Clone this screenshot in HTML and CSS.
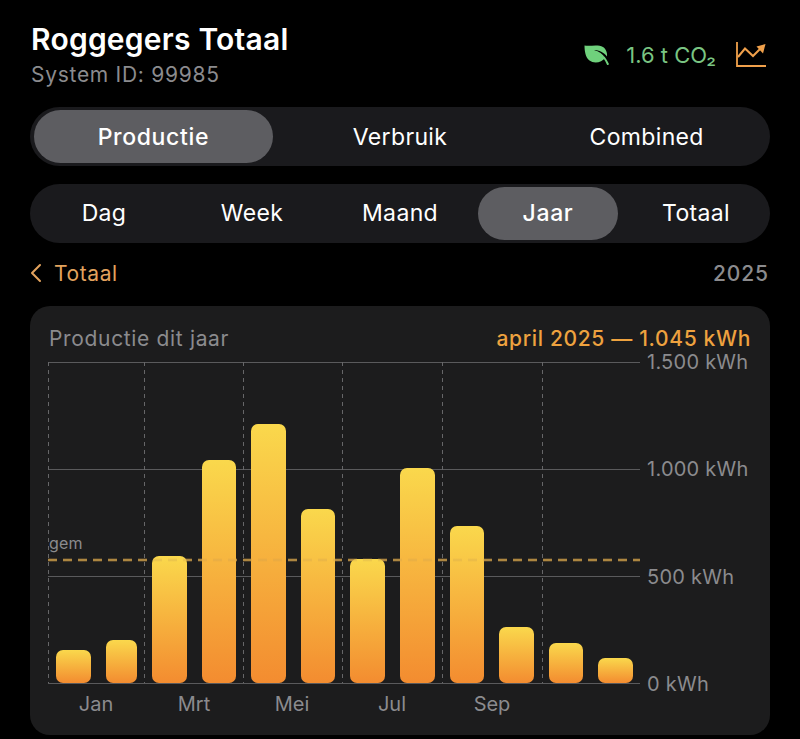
FILE: index.html
```html
<!DOCTYPE html>
<html lang="nl">
<head>
  <meta charset="UTF-8" />
  <title>Roggegers Totaal</title>
  <link rel="stylesheet" href="styles.css">
</head>
<body>

  <div class="top-bar">
    <div>
      <h1>Roggegers Totaal</h1>
      <div class="system-id">System ID: 99985</div>
    </div>
    <div class="top-right">
      <svg class="leaf" width="26" height="22" viewBox="0 0 26 22">
        <path fill="#6fd17c" d="M1.500 1.500 C7 2.500 15 0 20 3 C23 5 24.500 9 24 12.500 C21 8.500 16 6 11 6 C16 7.500 20 10 22 14 C19 18.500 11 20 6.500 16.500 C2.500 13.500 1.500 7 1.500 1.500 Z"/>
        <path fill="none" stroke="#6fd17c" stroke-width="2" stroke-linecap="round" d="M21 13.500 C22.500 15.500 23.700 17.500 24.800 20"/>
      </svg>
      <span class="co2">1.6 t CO₂</span>
      <svg width="32" height="27" viewBox="0 0 32 27">
        <path fill="none" stroke="#f0a04b" stroke-width="1.800" d="M2 1 V25 H31"/>
        <path fill="none" stroke="#f0a04b" stroke-width="2" d="M3 16 L10 7.500 L18 15 L26 7"/>
        <path fill="#f0a04b" d="M21.500 5.500 L30.500 3 L28 12.500 Z"/>
      </svg>
    </div>
  </div>

  <div class="segments large">
    <div class="segment active">Productie</div>
    <div class="segment">Verbruik</div>
    <div class="segment">Combined</div>
  </div>

  <div class="segments">
    <div class="segment">Dag</div>
    <div class="segment">Week</div>
    <div class="segment">Maand</div>
    <div class="segment active">Jaar</div>
    <div class="segment">Totaal</div>
  </div>

  <div class="nav-row">
    <div class="back">
      <svg width="12" height="20" viewBox="0 0 12 20">
        <path fill="none" stroke="#e3a35e" stroke-width="2" stroke-linecap="round" stroke-linejoin="round" d="M10 2 L2 10 L10 18"/>
      </svg>
      Totaal
    </div>
    <div class="year">2025</div>
  </div>

  <div class="card">
    <div class="card-head">
      <span class="card-title">Productie dit jaar</span>
      <span class="card-value">april 2025 — 1.045 kWh</span>
    </div>

    <div class="chart">
      <div class="plot">
        <svg class="grid" width="592" height="322" viewBox="0 0 592 322">
          <g stroke="#5a5a5c" stroke-width="1">
            <line x1="0" y1="0.500" x2="592" y2="0.500"/>
            <line x1="0" y1="107.500" x2="592" y2="107.500"/>
            <line x1="0" y1="214.500" x2="592" y2="214.500"/>
            <line x1="0" y1="321.500" x2="592" y2="321.500"/>
          </g>
          <g stroke="#666668" stroke-width="1" stroke-dasharray="4 4">
            <line x1="0.500" y1="0" x2="0.500" y2="321"/>
            <line x1="96.500" y1="0" x2="96.500" y2="321"/>
            <line x1="195.500" y1="0" x2="195.500" y2="321"/>
            <line x1="294.500" y1="0" x2="294.500" y2="321"/>
            <line x1="394.500" y1="0" x2="394.500" y2="321"/>
            <line x1="494.500" y1="0" x2="494.500" y2="321"/>
          </g>
          <line x1="0" y1="198" x2="592" y2="198" stroke="#a47f3d" stroke-width="2.500" stroke-dasharray="9 6"/>
        </svg>
        <div class="bars">
          <div class="bar" style="height: 33px"></div>
          <div class="bar" style="height: 43px"></div>
          <div class="bar" style="height: 127px"></div>
          <div class="bar" style="height: 223px"></div>
          <div class="bar" style="height: 259px"></div>
          <div class="bar" style="height: 174px"></div>
          <div class="bar" style="height: 124px"></div>
          <div class="bar" style="height: 215px"></div>
          <div class="bar" style="height: 157px"></div>
          <div class="bar" style="height: 56px"></div>
          <div class="bar" style="height: 40px"></div>
          <div class="bar" style="height: 25px"></div>
        </div>
        <svg class="grid" width="592" height="322" viewBox="0 0 592 322">
          <line x1="0" y1="198" x2="592" y2="198" stroke="#c99a50" stroke-opacity="0.250" stroke-width="2.500" stroke-dasharray="9 6"/>
        </svg>
        <span class="avg-label">gem</span>
      </div>
      <div class="y-axis">
        <span>1.500 kWh</span>
        <span>1.000 kWh</span>
        <span>500 kWh</span>
        <span>0 kWh</span>
      </div>
    </div>

    <div class="x-axis">
      <span>Jan</span>
      <span>Mrt</span>
      <span>Mei</span>
      <span>Jul</span>
      <span>Sep</span>
    </div>
  </div>

</body>
</html>
```

FILE: styles.css
```css
* {
  box-sizing: border-box;
}

body {
  margin: 0;
  height: 739px;
  overflow: hidden;
  padding: 0 30px;
  background-color: #000000;
  color: #ffffff;
  font-family: 'Inter', sans-serif;
}

.top-bar {
  display: flex;
  justify-content: space-between;
  align-items: flex-start;
  height: 107px;
  padding: 22px 3px 0 1px;
}

h1 {
  margin: 0;
  font-size: 30px;
  font-weight: 600;
  line-height: 34px;
  letter-spacing: 0.22px;
}

.system-id {
  margin-top: 7px;
  color: #8b8b8e;
  font-size: 21px;
  line-height: 24px;
  letter-spacing: 0.72px;
}

.top-right {
  display: flex;
  align-items: center;
  gap: 17px;
  margin-top: 19px;
}

.co2 {
  color: #7ac583;
  font-size: 22px;
  margin-right: 2px;
}

.segments {
  display: flex;
  align-items: center;
  height: 59px;
  margin-bottom: 18px;
  background-color: #1a1a1d;
  border-radius: 30px;
}

.segment {
  flex: 1;
  height: 53px;
  margin: 0 4px;
  border-radius: 27px;
  font-size: 23px;
  font-weight: 400;
  line-height: 53px;
  letter-spacing: 0.35px;
  text-align: center;
}

.large .segment {
  line-height: 55px;
}

.segment.active {
  background-color: #5d5d61;
  font-weight: 500;
  letter-spacing: 0.65px;
}

.nav-row {
  display: flex;
  justify-content: space-between;
  align-items: center;
  height: 26px;
  margin-top: -1px;
  margin-bottom: 20px;
  padding-right: 1px;
  font-size: 21px;
  letter-spacing: 0.6px;
}

.back {
  display: flex;
  align-items: center;
  gap: 12px;
  color: #e3a35e;
}

.year {
  color: #8b8b8e;
  font-weight: 500;
  letter-spacing: 0.9px;
}

.card {
  height: 429px;
  padding: 18px 18px 0;
  background-color: #1c1c1d;
  border-radius: 20px;
}

.card-head {
  display: flex;
  justify-content: space-between;
  align-items: center;
  height: 28px;
  padding-left: 1px;
  padding-right: 1px;
}

.card-title {
  color: #8b8b8e;
  font-size: 21px;
  letter-spacing: 0.66px;
}

.card-value {
  color: #eea23f;
  font-size: 21px;
  font-weight: 500;
  letter-spacing: 0.66px;
}

.chart {
  display: flex;
  margin-top: 10px;
}

.plot {
  position: relative;
  width: 592px;
  height: 322px;
}

.grid {
  position: absolute;
  top: 0;
  left: 0;
}

.bars {
  position: relative;
  display: grid;
  grid-template-columns: 35px 31px 35px 34px 35px 34px 35px 35px 34px 35px 34px 35px;
  column-gap: 15px;
  align-items: end;
  height: 321px;
  padding-left: 8px;
}

.bar {
  background: linear-gradient(#fad84c, #f38c30);
  border-radius: 7px;
}

.avg-label {
  position: absolute;
  top: 171px;
  left: 1px;
  color: #8b8b8e;
  font-size: 16px;
  letter-spacing: 0.2px;
}

.y-axis {
  display: flex;
  flex-direction: column;
  justify-content: space-between;
  height: 346px;
  margin-top: -12px;
  padding-left: 7px;
  color: #8b8b8e;
  font-size: 20px;
  line-height: 24px;
  letter-spacing: 0.25px;
  white-space: nowrap;
}

.x-axis {
  display: grid;
  grid-template-columns: 96px 100px 96px 104px 96px;
  margin-top: -5px;
  color: #8b8b8e;
  font-size: 20px;
  line-height: 26px;
}

.x-axis span {
  text-align: center;
}
```
